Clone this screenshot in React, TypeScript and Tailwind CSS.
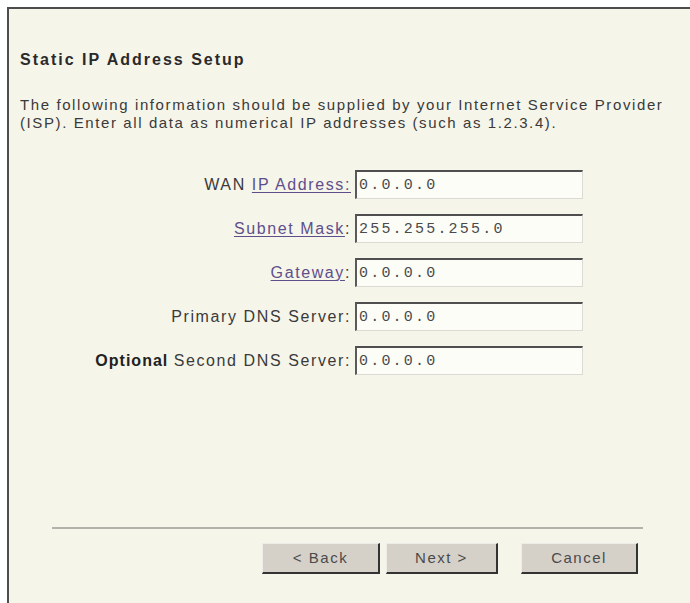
import React from "react";

const sans = { fontFamily: '"Liberation Sans", Arial, sans-serif' };

type Field = {
  prefix?: React.ReactNode;
  link?: string;
  suffix?: string;
  label?: string;
  value: string;
};

const fields: Field[] = [
  { prefix: "WAN ", link: "IP Address:", value: "0.0.0.0" },
  { link: "Subnet Mask", suffix: ":", value: "255.255.255.0" },
  { link: "Gateway", suffix: ":", value: "0.0.0.0" },
  { label: "Primary DNS Server:", value: "0.0.0.0" },
  {
    prefix: <span className="font-bold tracking-[1px] text-[#222]">Optional </span>,
    label: "Second DNS Server:",
    value: "0.0.0.0",
  },
];

function FieldRow({ field }: { field: Field }) {
  return (
    <div className="flex items-center gap-[4px]">
      <div className="w-[342px] text-right text-[16px] tracking-[1.6px] text-[#3a3a3a]">
        {field.prefix}
        {field.link && (
          <a href="#" className="text-[#5e4f8c] underline underline-offset-2 decoration-1">
            {field.link}
          </a>
        )}
        {field.suffix}
        {field.label}
      </div>
      <input
        defaultValue={field.value}
        className="w-[228px] h-[29px] px-[2px] bg-[#fdfdf8] border-t-2 border-l-2 border-r border-b border-t-[#4f4f4f] border-l-[#5a5a5a] border-r-[#dcdad2] border-b-[#dcdad2] text-[15px] tracking-[2.2px] text-[#4a4a4a] outline-none"
        style={{ fontFamily: '"Liberation Mono", "Courier New", monospace' }}
      />
    </div>
  );
}

function WizardButton({ width, children }: { width: string; children: React.ReactNode }) {
  return (
    <button
      type="button"
      className={`${width} h-[31px] bg-[#d5d1c9] border-t border-l border-r-2 border-b-2 border-t-[#eeece6] border-l-[#eeece6] border-r-[#333] border-b-[#333] text-[15px] tracking-[1.5px] text-[#4a4a4a]`}
    >
      {children}
    </button>
  );
}

export default function App() {
  return (
    <div className="w-[690px] h-[603px] bg-white pt-[7px] pl-[7px] overflow-hidden" style={sans}>
      <div className="h-full bg-[#f6f5ea] border-t-2 border-l-2 border-[#4d4d4d] flex flex-col">
        <h1 className="mt-[42px] ml-[11px] text-[16px] leading-[18px] font-bold tracking-[2px] text-[#2a2a2a]">
          Static IP Address Setup
        </h1>
        <p className="mt-[27px] ml-[11px] text-[15px] leading-[18px] tracking-[1.6px] text-[#3a3a3a] whitespace-nowrap">
          The following information should be supplied by your Internet Service Provider
          <br />
          (ISP). Enter all data as numerical IP addresses (such as 1.2.3.4).
        </p>

        <div className="mt-[38px] flex flex-col gap-[15px]">
          {fields.map((f, i) => (
            <FieldRow key={i} field={f} />
          ))}
        </div>

        <div className="mt-auto mb-[29px]">
          <div className="ml-[43px] mr-[47px] h-[2px] bg-[#b4b2aa]" />
          <div className="mt-[14px] flex justify-end pr-[52px]">
            <WizardButton width="w-[118px]">&lt; Back</WizardButton>
            <div className="w-[6px]" />
            <WizardButton width="w-[112px]">Next &gt;</WizardButton>
            <div className="w-[23px]" />
            <WizardButton width="w-[117px]">Cancel</WizardButton>
          </div>
        </div>
      </div>
    </div>
  );
}
